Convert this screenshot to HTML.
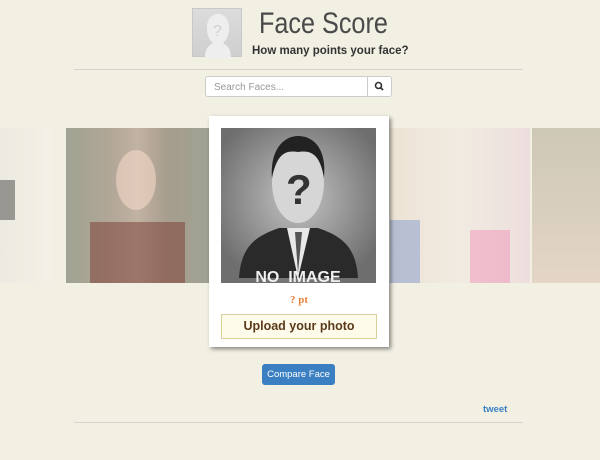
<!DOCTYPE html>
<html><head><meta charset="utf-8"><style>
*{margin:0;padding:0;box-sizing:border-box}
body{width:600px;height:460px;background:#f2efe3;font-family:"Liberation Sans",sans-serif;position:relative;overflow:hidden}
.abs{position:absolute}
.logo{left:192px;top:8px;width:50px;height:49px;background:linear-gradient(#dcdcdc,#cfcfcf);border:1px solid #c8c8c8}
.title{left:259px;top:7px;font-size:30px;color:#4a4a4a;transform:scaleX(0.84);transform-origin:left top;white-space:nowrap}
.sub{left:252px;top:45px;font-size:11.5px;color:#333;font-weight:bold;white-space:nowrap}
.hr{left:74px;width:449px;height:1px;background:#d6d4cc}
.search{left:205px;top:76px;width:163px;height:21px;background:#fff;border:1px solid #ccc;border-radius:3px 0 0 3px;font-size:10px;color:#999;padding:5px 8px}
.sbtn{left:367px;top:76px;width:25px;height:21px;background:#fff;border:1px solid #ccc;border-radius:0 3px 3px 0}
.ph{top:128px;height:155px;opacity:.55}
.card{left:209px;top:116px;width:180px;height:231px;background:#fff;box-shadow:2px 2px 4px rgba(0,0,0,.45)}
.img{left:221px;top:128px;width:155px;height:155px;background:radial-gradient(circle at 50% 45%,#c4c4c4,#6e6e6e 80%)}
.pt{left:209px;top:294px;width:180px;text-align:center;color:#e8823a;font-weight:bold;font-size:11px;font-family:"Liberation Serif",serif}
.up{left:221px;top:314px;width:156px;height:25px;background:#fffbea;border:1px solid #d8cf9a;text-align:center;font-size:12.5px;font-weight:bold;color:#5a3a1a;line-height:23px}
.cmp{left:262px;top:364px;width:73px;height:21px;background:#3a7fc1;border-radius:3px;color:#fff;font-size:9.5px;text-align:center;line-height:21px}
.tw{left:483px;top:404px;color:#3a7fc1;font-size:9.5px;font-weight:bold}
</style></head><body>
<div class="abs logo"><svg width="50" height="49"><path d="M12 49 C12 38 17 36 20 34 C15 30 14 24 14 18 C14 10 19 5 25 5 C31 5 36 10 36 18 C36 24 35 30 30 34 C33 36 38 38 38 49Z" fill="#eee"/><text x="20" y="27" font-size="16" fill="#cfcfcf" font-family="Liberation Sans">?</text></svg></div>
<div class="abs title">Face Score</div>
<div class="abs sub">How many points your face?</div>
<div class="abs hr" style="top:69px"></div>
<div class="abs search">Search Faces...</div>
<div class="abs sbtn"><svg width="23" height="19"><circle cx="10.5" cy="8.5" r="3" fill="none" stroke="#333" stroke-width="1.6"/><path d="M12.7 10.7 L15 13" stroke="#333" stroke-width="1.8"/></svg></div>
<div class="abs ph" style="left:0;width:53px;background:linear-gradient(90deg,#e8e6de,#f5f2ea);"></div>
<div class="abs ph" style="left:0;top:180px;width:15px;height:40px;background:#444;opacity:.5"></div>
<div class="abs ph" style="left:66px;width:144px;background:linear-gradient(90deg,#5d6650,#7a6a58 30%,#9a8070 50%,#6a5a48 70%,#5a6350);"></div>
<div class="abs ph" style="left:116px;top:150px;width:40px;height:60px;border-radius:50%;background:#f4d8c8;opacity:.6"></div>
<div class="abs ph" style="left:90px;top:222px;width:95px;height:61px;background:#7a3a30;opacity:.5"></div>
<div class="abs ph" style="left:390px;width:140px;background:linear-gradient(90deg,#e8d8c8,#f0e8e0 50%,#e8d0d8);"></div>
<div class="abs ph" style="left:390px;top:220px;width:30px;height:63px;background:#6688cc;opacity:.4"></div>
<div class="abs ph" style="left:470px;top:230px;width:40px;height:53px;background:#f080b0;opacity:.4"></div>
<div class="abs ph" style="left:532px;width:68px;background:linear-gradient(#b0a890,#d8c0b0);"></div>
<div class="abs card"></div>
<div class="abs img"><svg width="155" height="155"><path d="M18 150 C20 118 35 108 58 100 L97 100 C120 108 135 118 137 150Z" fill="#2a2a2a"/><path d="M66 100 L77 150 L89 100Z" fill="#e8e8e8"/><path d="M74 104 L77 145 L81 104Z" fill="#555"/><ellipse cx="77" cy="55" rx="26" ry="40" fill="#d6d6d6"/><path d="M51 50 C49 20 64 8 77 8 C92 8 106 20 103 50 C99 26 90 22 77 24 C64 22 56 26 51 50Z" fill="#222"/><text x="65" y="76" font-size="42" font-weight="bold" fill="#333" font-family="Liberation Sans">?</text><text x="77" y="154" text-anchor="middle" font-size="16" font-weight="bold" fill="#f0f0f0" font-family="Liberation Sans">NO_IMAGE</text></svg></div>
<div class="abs pt">? pt</div>
<div class="abs up">Upload your photo</div>
<div class="abs cmp">Compare Face</div>
<div class="abs tw">tweet</div>
<div class="abs hr" style="top:422px"></div>
</body></html>
